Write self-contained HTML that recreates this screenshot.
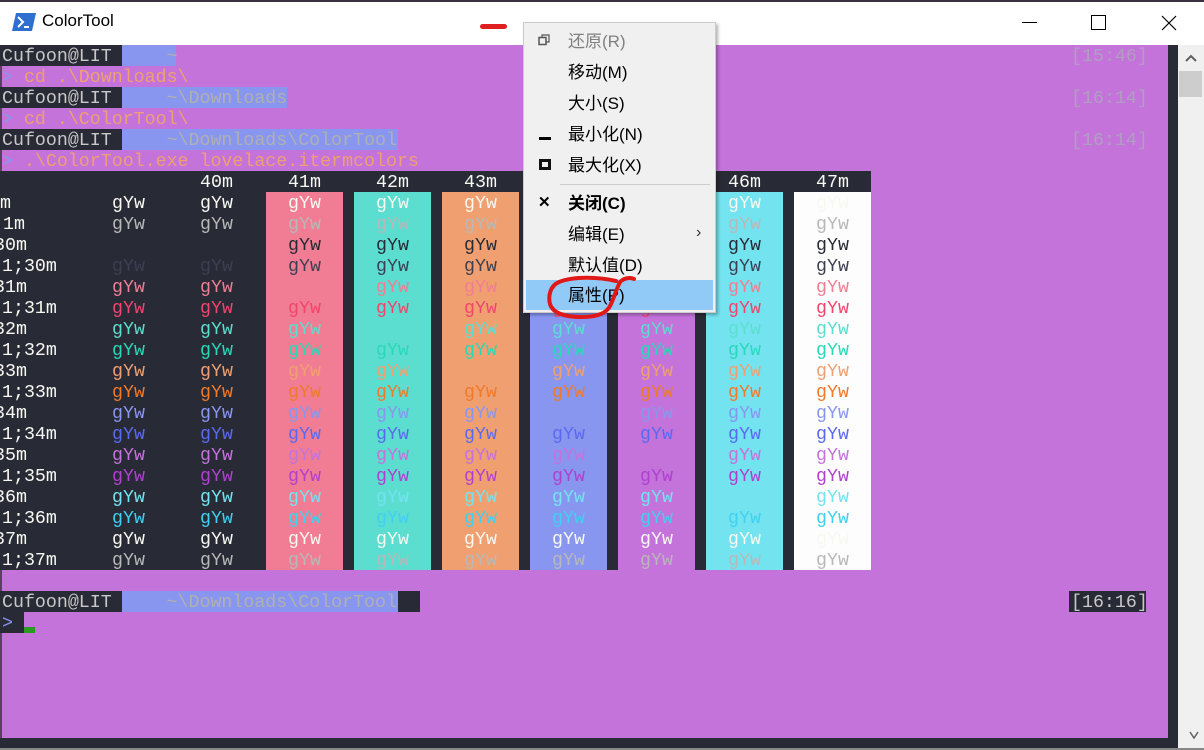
<!DOCTYPE html>
<html><head><meta charset="utf-8"><style>
*{margin:0;padding:0;box-sizing:border-box}
body{width:1204px;height:750px;position:relative;overflow:hidden;background:#c373da;font-family:"Liberation Mono",monospace}
.abs{position:absolute}
.t{position:absolute;font-family:"Liberation Mono","Noto Sans CJK SC",monospace;font-size:18.3px;line-height:21px;white-space:pre;height:21px;padding-top:2px}
.r{position:absolute;left:0;height:21px;width:871px;font-family:"Liberation Mono",monospace;font-size:18.3px;line-height:21px;white-space:pre;padding-top:2px}
.r b{position:absolute;font-weight:normal}
.r i{font-style:normal;position:absolute;width:77px;text-align:center}
.menu div.it{position:absolute;left:44px;font-family:"Liberation Sans","Noto Sans CJK SC",sans-serif;font-size:17px;color:#000;line-height:20px}
</style></head><body>
<div class="abs" style="left:0;top:0;width:1204px;height:45px;background:#fff"></div>
<div class="abs" style="left:0;top:0;width:1204px;height:2px;background:#3a3040"></div>
<svg class="abs" style="left:12px;top:12px" width="24" height="20" viewBox="0 0 24 20"><polygon points="4,1 24,1 20,19 0,19" fill="#2f6fd0"/><polyline points="6,5 11,10 6,15" fill="none" stroke="#fff" stroke-width="2"/><line x1="12" y1="15" x2="17" y2="15" stroke="#fff" stroke-width="2"/></svg>
<div class="abs" style="left:42px;top:11px;font-family:'Liberation Sans',sans-serif;font-size:17px;color:#000">ColorTool</div>
<div class="abs" style="left:480px;top:24px;width:27px;height:5px;border-radius:3px;background:#e02020"></div>
<div class="abs" style="left:1022px;top:22px;width:15px;height:1px;background:#000"></div>
<div class="abs" style="left:1091px;top:15px;width:15px;height:15px;border:1px solid #000"></div>
<svg class="abs" style="left:1161px;top:15px" width="16" height="16"><path d="M1 1L15 15M15 1L1 15" stroke="#000" stroke-width="1.2"/></svg>
<div class="abs" style="left:1168px;top:45px;width:10px;height:693px;background:#282a36"></div>
<div class="abs" style="left:1178px;top:45px;width:26px;height:705px;background:#f0f0f0"></div>
<svg class="abs" style="left:1184px;top:52px" width="14" height="12"><path d="M2 9L7 4L12 9" fill="none" stroke="#606060" stroke-width="2"/></svg>
<div class="abs" style="left:1179px;top:71px;width:23px;height:26px;background:#cdcdcd"></div>
<svg class="abs" style="left:1188px;top:730px" width="12" height="10"><path d="M2 2L6 8L10 2" fill="none" stroke="#606060" stroke-width="1.5"/></svg>
<div class="abs" style="left:0;top:738px;width:1178px;height:10px;background:#282a36"></div>
<div class="abs" style="left:0;top:748px;width:1204px;height:2px;background:#888"></div>
<div class="abs" style="left:0;top:45px;width:2px;height:693px;background:#5a4060"></div>

<div class="abs" style="left:0;top:45px;width:122px;height:21px;background:#282a36"></div>
<div class="abs" style="left:122px;top:45px;width:54px;height:21px;background:#8896f0"></div>
<div class="t" style="left:2px;top:45px;color:#c8c8c8">Cufoon@LIT     <span style="color:#b0b0b0">~</span></div>
<div class="t" style="left:1071px;top:45px;color:#b0a0c0">[15:46]</div>
<div class="t" style="left:2px;top:66px;color:#f0a070"><span style="color:#8896f0">&gt;</span> cd .\Downloads\</div>
<div class="abs" style="left:0;top:87px;width:122px;height:21px;background:#282a36"></div>
<div class="abs" style="left:122px;top:87px;width:165px;height:21px;background:#8896f0"></div>
<div class="t" style="left:2px;top:87px;color:#c8c8c8">Cufoon@LIT     <span style="color:#b0b0b0">~\Downloads</span></div>
<div class="t" style="left:1071px;top:87px;color:#b0a0c0">[16:14]</div>
<div class="t" style="left:2px;top:108px;color:#f0a070"><span style="color:#8896f0">&gt;</span> cd .\ColorTool\</div>
<div class="abs" style="left:0;top:129px;width:122px;height:21px;background:#282a36"></div>
<div class="abs" style="left:122px;top:129px;width:276px;height:21px;background:#8896f0"></div>
<div class="t" style="left:2px;top:129px;color:#c8c8c8">Cufoon@LIT     <span style="color:#b0b0b0">~\Downloads\ColorTool</span></div>
<div class="t" style="left:1071px;top:129px;color:#b0a0c0">[16:14]</div>
<div class="t" style="left:2px;top:150px;color:#f0a070"><span style="color:#8896f0">&gt;</span> .\ColorTool.exe lovelace.itermcolors</div>

<div class="abs" style="left:0;top:171px;width:871px;height:399px;background:#282a36"></div>
<div class="abs" style="left:266px;top:192px;width:77px;height:378px;background:#f07d93"></div>
<div class="abs" style="left:354px;top:192px;width:77px;height:378px;background:#5bdecf"></div>
<div class="abs" style="left:442px;top:192px;width:77px;height:378px;background:#f0a070"></div>
<div class="abs" style="left:530px;top:192px;width:77px;height:378px;background:#8896f0"></div>
<div class="abs" style="left:618px;top:192px;width:77px;height:378px;background:#c373da"></div>
<div class="abs" style="left:706px;top:192px;width:77px;height:378px;background:#74e3f0"></div>
<div class="abs" style="left:794px;top:192px;width:77px;height:378px;background:#fdfdfd"></div>
<div class="r" style="top:171px;color:#f8f8f2"><i style="left:178px">40m</i><i style="left:266px">41m</i><i style="left:354px">42m</i><i style="left:442px">43m</i><i style="left:530px">44m</i><i style="left:618px">45m</i><i style="left:706px">46m</i><i style="left:794px">47m</i></div>
<div class="r" style="top:192px;color:#f8f8f2"><b style="left:-11px">0m</b><i style="left:90px">gYw</i><i style="left:178px">gYw</i><i style="left:266px">gYw</i><i style="left:354px">gYw</i><i style="left:442px">gYw</i><i style="left:530px">gYw</i><i style="left:618px">gYw</i><i style="left:706px">gYw</i><i style="left:794px">gYw</i></div>
<div class="r" style="top:213px;color:#b8b8b8"><b style="left:3px;color:#f8f8f2">1m</b><i style="left:90px">gYw</i><i style="left:178px">gYw</i><i style="left:266px">gYw</i><i style="left:354px">gYw</i><i style="left:442px">gYw</i><i style="left:530px">gYw</i><i style="left:618px">gYw</i><i style="left:706px">gYw</i><i style="left:794px">gYw</i></div>
<div class="r" style="top:234px;color:#282a36"><b style="left:-6px;color:#f8f8f2">30m</b><i style="left:90px">gYw</i><i style="left:178px">gYw</i><i style="left:266px">gYw</i><i style="left:354px">gYw</i><i style="left:442px">gYw</i><i style="left:530px">gYw</i><i style="left:618px">gYw</i><i style="left:706px">gYw</i><i style="left:794px">gYw</i></div>
<div class="r" style="top:255px;color:#3c3f52"><b style="left:2px;color:#f8f8f2">1;30m</b><i style="left:90px">gYw</i><i style="left:178px">gYw</i><i style="left:266px">gYw</i><i style="left:354px">gYw</i><i style="left:442px">gYw</i><i style="left:530px">gYw</i><i style="left:618px">gYw</i><i style="left:706px">gYw</i><i style="left:794px">gYw</i></div>
<div class="r" style="top:276px;color:#f07d93"><b style="left:-6px;color:#f8f8f2">31m</b><i style="left:90px">gYw</i><i style="left:178px">gYw</i><i style="left:266px">gYw</i><i style="left:354px">gYw</i><i style="left:442px">gYw</i><i style="left:530px">gYw</i><i style="left:618px">gYw</i><i style="left:706px">gYw</i><i style="left:794px">gYw</i></div>
<div class="r" style="top:297px;color:#f0456d"><b style="left:2px;color:#f8f8f2">1;31m</b><i style="left:90px">gYw</i><i style="left:178px">gYw</i><i style="left:266px">gYw</i><i style="left:354px">gYw</i><i style="left:442px">gYw</i><i style="left:530px">gYw</i><i style="left:618px">gYw</i><i style="left:706px">gYw</i><i style="left:794px">gYw</i></div>
<div class="r" style="top:318px;color:#5bdecf"><b style="left:-6px;color:#f8f8f2">32m</b><i style="left:90px">gYw</i><i style="left:178px">gYw</i><i style="left:266px">gYw</i><i style="left:354px">gYw</i><i style="left:442px">gYw</i><i style="left:530px">gYw</i><i style="left:618px">gYw</i><i style="left:706px">gYw</i><i style="left:794px">gYw</i></div>
<div class="r" style="top:339px;color:#2ad8b8"><b style="left:2px;color:#f8f8f2">1;32m</b><i style="left:90px">gYw</i><i style="left:178px">gYw</i><i style="left:266px">gYw</i><i style="left:354px">gYw</i><i style="left:442px">gYw</i><i style="left:530px">gYw</i><i style="left:618px">gYw</i><i style="left:706px">gYw</i><i style="left:794px">gYw</i></div>
<div class="r" style="top:360px;color:#f0a070"><b style="left:-6px;color:#f8f8f2">33m</b><i style="left:90px">gYw</i><i style="left:178px">gYw</i><i style="left:266px">gYw</i><i style="left:354px">gYw</i><i style="left:442px">gYw</i><i style="left:530px">gYw</i><i style="left:618px">gYw</i><i style="left:706px">gYw</i><i style="left:794px">gYw</i></div>
<div class="r" style="top:381px;color:#f07a28"><b style="left:2px;color:#f8f8f2">1;33m</b><i style="left:90px">gYw</i><i style="left:178px">gYw</i><i style="left:266px">gYw</i><i style="left:354px">gYw</i><i style="left:442px">gYw</i><i style="left:530px">gYw</i><i style="left:618px">gYw</i><i style="left:706px">gYw</i><i style="left:794px">gYw</i></div>
<div class="r" style="top:402px;color:#8896f0"><b style="left:-6px;color:#f8f8f2">34m</b><i style="left:90px">gYw</i><i style="left:178px">gYw</i><i style="left:266px">gYw</i><i style="left:354px">gYw</i><i style="left:442px">gYw</i><i style="left:530px">gYw</i><i style="left:618px">gYw</i><i style="left:706px">gYw</i><i style="left:794px">gYw</i></div>
<div class="r" style="top:423px;color:#5a6af0"><b style="left:2px;color:#f8f8f2">1;34m</b><i style="left:90px">gYw</i><i style="left:178px">gYw</i><i style="left:266px">gYw</i><i style="left:354px">gYw</i><i style="left:442px">gYw</i><i style="left:530px">gYw</i><i style="left:618px">gYw</i><i style="left:706px">gYw</i><i style="left:794px">gYw</i></div>
<div class="r" style="top:444px;color:#c373da"><b style="left:-6px;color:#f8f8f2">35m</b><i style="left:90px">gYw</i><i style="left:178px">gYw</i><i style="left:266px">gYw</i><i style="left:354px">gYw</i><i style="left:442px">gYw</i><i style="left:530px">gYw</i><i style="left:618px">gYw</i><i style="left:706px">gYw</i><i style="left:794px">gYw</i></div>
<div class="r" style="top:465px;color:#b040d0"><b style="left:2px;color:#f8f8f2">1;35m</b><i style="left:90px">gYw</i><i style="left:178px">gYw</i><i style="left:266px">gYw</i><i style="left:354px">gYw</i><i style="left:442px">gYw</i><i style="left:530px">gYw</i><i style="left:618px">gYw</i><i style="left:706px">gYw</i><i style="left:794px">gYw</i></div>
<div class="r" style="top:486px;color:#74e3f0"><b style="left:-6px;color:#f8f8f2">36m</b><i style="left:90px">gYw</i><i style="left:178px">gYw</i><i style="left:266px">gYw</i><i style="left:354px">gYw</i><i style="left:442px">gYw</i><i style="left:530px">gYw</i><i style="left:618px">gYw</i><i style="left:706px">gYw</i><i style="left:794px">gYw</i></div>
<div class="r" style="top:507px;color:#40d0f0"><b style="left:2px;color:#f8f8f2">1;36m</b><i style="left:90px">gYw</i><i style="left:178px">gYw</i><i style="left:266px">gYw</i><i style="left:354px">gYw</i><i style="left:442px">gYw</i><i style="left:530px">gYw</i><i style="left:618px">gYw</i><i style="left:706px">gYw</i><i style="left:794px">gYw</i></div>
<div class="r" style="top:528px;color:#f8f8f2"><b style="left:-6px">37m</b><i style="left:90px">gYw</i><i style="left:178px">gYw</i><i style="left:266px">gYw</i><i style="left:354px">gYw</i><i style="left:442px">gYw</i><i style="left:530px">gYw</i><i style="left:618px">gYw</i><i style="left:706px">gYw</i><i style="left:794px">gYw</i></div>
<div class="r" style="top:549px;color:#b8b8b8"><b style="left:2px;color:#f8f8f2">1;37m</b><i style="left:90px">gYw</i><i style="left:178px">gYw</i><i style="left:266px">gYw</i><i style="left:354px">gYw</i><i style="left:442px">gYw</i><i style="left:530px">gYw</i><i style="left:618px">gYw</i><i style="left:706px">gYw</i><i style="left:794px">gYw</i></div>

<div class="abs" style="left:0;top:591px;width:122px;height:21px;background:#282a36"></div>
<div class="abs" style="left:122px;top:591px;width:276px;height:21px;background:#8896f0"></div>
<div class="abs" style="left:398px;top:591px;width:22px;height:21px;background:#282a36"></div>
<div class="t" style="left:2px;top:591px;color:#c8c8c8">Cufoon@LIT     <span style="color:#b0b0b0">~\Downloads\ColorTool</span></div>
<div class="abs" style="left:1069px;top:591px;width:77px;height:21px;background:#282a36"></div>
<div class="t" style="left:1071px;top:591px;color:#c8c8c8">[16:16]</div>
<div class="abs" style="left:0;top:612px;width:24px;height:21px;background:#282a36"></div>
<div class="t" style="left:2px;top:612px;color:#8896f0">&gt;</div>
<div class="abs" style="left:24px;top:627px;width:11px;height:6px;background:#2a9a20"></div>

<div class="abs menu" style="left:523px;top:22px;width:193px;height:291px;background:#f0f0f0;border:1px solid #ccc;box-shadow:2px 2px 3px rgba(0,0,0,.3)">
 <svg class="abs" style="left:14px;top:11px" width="12" height="12"><rect x="1" y="3.5" width="7" height="7" fill="none" stroke="#555" stroke-width="1.5"/><path d="M4 3.5V1H11V8H8" fill="none" stroke="#555" stroke-width="1.2"/></svg>
 <div class="it" style="top:9px;color:#808080">还原(R)</div>
 <div class="it" style="top:40px">移动(M)</div>
 <div class="it" style="top:71px">大小(S)</div>
 <div class="abs" style="left:15px;top:114px;width:12px;height:3px;background:#000"></div>
 <div class="it" style="top:102px">最小化(N)</div>
 <div class="abs" style="left:15px;top:136px;width:12px;height:11px;border:3px solid #111"></div>
 <div class="it" style="top:133px">最大化(X)</div>
 <div class="abs" style="left:36px;top:161px;width:150px;height:1px;background:#ccc"></div>
 <div class="abs" style="left:14px;top:170px;font:bold 15px 'Liberation Sans',sans-serif">✕</div>
 <div class="it" style="top:171px;font-weight:bold">关闭(C)</div>
 <div class="it" style="top:202px">编辑(E)</div>
 <div class="abs" style="left:172px;top:201px;font:16px 'Liberation Sans',sans-serif;color:#333">›</div>
 <div class="it" style="top:233px">默认值(D)</div>
 <div class="abs" style="left:2px;top:257px;width:187px;height:30px;background:#91c9f7"></div>
 <div class="it" style="top:263px">属性(P)</div>
</div>
<svg class="abs" style="left:544px;top:272px" width="94" height="50"><path d="M72 9C55 5 30 4 15 10C6 14 4 24 6 32C9 42 22 45 38 45C52 45 62 42 66 34C70 26 72 18 76 10C80 6 86 5 90 7" fill="none" stroke="#e01818" stroke-width="4" stroke-linecap="round" stroke-linejoin="round"/></svg>
</body></html>
